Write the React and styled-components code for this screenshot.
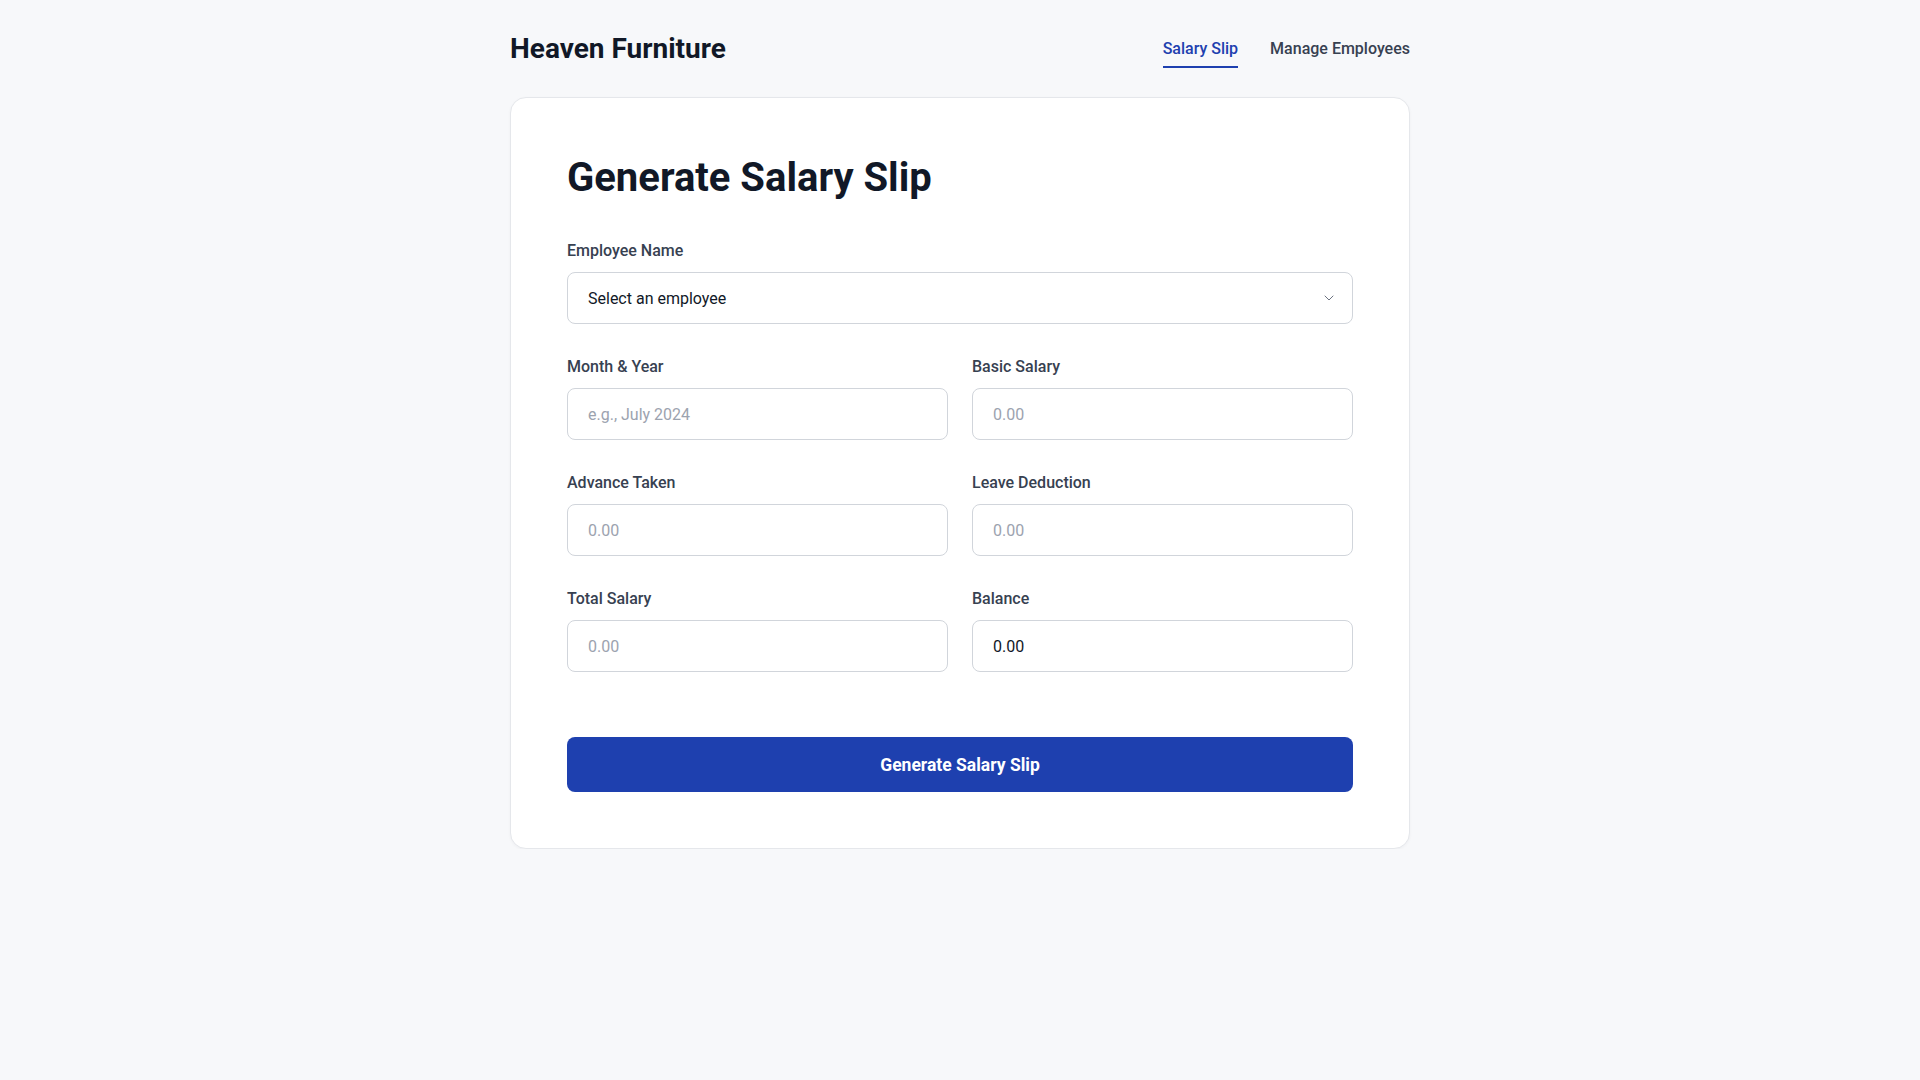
import React from "react";
import styled, { createGlobalStyle } from "styled-components";
import { ChevronDown } from "lucide-react";

const GlobalStyle = createGlobalStyle`
  * { box-sizing: border-box; }
  html, body { margin: 0; padding: 0; }
  body {
    background: #f7f8fa;
    font-family: Roboto, "Liberation Sans", Arial, sans-serif;
    color: #111827;
  }
`;

const Page = styled.div`
  width: 900px;
  margin: 0 auto;
  padding-top: 31px;
`;

const Header = styled.header`
  display: flex;
  justify-content: space-between;
  align-items: flex-start;
`;

const Brand = styled.h1`
  margin: 1px 0 0;
  font-size: 28px;
  font-weight: 700;
  color: #111827;
  line-height: normal;
`;

const Nav = styled.nav`
  display: flex;
  gap: 32px;
`;

const NavLink = styled.a`
  display: block;
  font-size: 16px;
  font-weight: 500;
  line-height: 24px;
  padding: 6px 0 5px;
  border-bottom: 2px solid ${(p) => (p.$active ? "#1e40af" : "transparent")};
  color: ${(p) => (p.$active ? "#1e40af" : "#374151")};
  text-decoration: none;
  cursor: pointer;
`;

const Card = styled.main`
  margin-top: 29px;
  background: #ffffff;
  border: 1px solid #e5e7eb;
  border-radius: 16px;
  box-shadow: 0 1px 3px rgba(15, 23, 42, 0.04);
  padding: 56px;
`;

const Title = styled.h2`
  margin: 0 0 38px;
  font-size: 40px;
  font-weight: 700;
  line-height: normal;
  color: #111827;
`;

const Form = styled.form`
  display: flex;
  flex-direction: column;
`;

const Grid = styled.div`
  display: grid;
  grid-template-columns: 1fr 1fr;
  column-gap: 24px;
  row-gap: 31px;
`;

const Field = styled.div`
  display: flex;
  flex-direction: column;
  grid-column: ${(p) => (p.$full ? "1 / -1" : "auto")};
`;

const Label = styled.label`
  font-size: 16px;
  font-weight: 500;
  line-height: 24px;
  color: #374151;
  margin-bottom: 9px;
`;

const Input = styled.input`
  height: 52px;
  width: 100%;
  padding: 0 20px;
  border: 1px solid #d1d5db;
  border-radius: 8px;
  background: #ffffff;
  font-family: inherit;
  font-size: 16px;
  color: #111827;
  outline: none;
  &::placeholder { color: #9ca3af; }
`;

const SelectWrap = styled.div`
  position: relative;
`;

const Select = styled.select`
  appearance: none;
  height: 52px;
  width: 100%;
  padding: 0 44px 0 20px;
  border: 1px solid #d1d5db;
  border-radius: 8px;
  background: #ffffff;
  font-family: inherit;
  font-size: 16px;
  color: #111827;
  outline: none;
`;

const Chevron = styled.span`
  position: absolute;
  right: 16px;
  top: 50%;
  transform: translateY(-50%);
  display: flex;
  color: #6b7280;
  pointer-events: none;
`;

const Button = styled.button`
  margin-top: 65px;
  height: 55px;
  width: 100%;
  border: none;
  border-radius: 8px;
  background: #1e40af;
  color: #ffffff;
  font-family: inherit;
  font-size: 17.5px;
  font-weight: 700;
  cursor: pointer;
`;

const fields = [
  { id: "month", label: "Month & Year", placeholder: "e.g., July 2024" },
  { id: "basic", label: "Basic Salary", placeholder: "0.00" },
  { id: "advance", label: "Advance Taken", placeholder: "0.00" },
  { id: "leave", label: "Leave Deduction", placeholder: "0.00" },
  { id: "total", label: "Total Salary", placeholder: "0.00" },
  { id: "balance", label: "Balance", value: "0.00" },
];

export default function App() {
  return (
    <>
      <GlobalStyle />
      <Page>
        <Header>
          <Brand>Heaven Furniture</Brand>
          <Nav>
            <NavLink $active>Salary Slip</NavLink>
            <NavLink>Manage Employees</NavLink>
          </Nav>
        </Header>
        <Card>
          <Title>Generate Salary Slip</Title>
          <Form onSubmit={(e) => e.preventDefault()}>
            <Grid>
              <Field $full>
                <Label htmlFor="employee">Employee Name</Label>
                <SelectWrap>
                  <Select id="employee" defaultValue="">
                    <option value="">Select an employee</option>
                  </Select>
                  <Chevron>
                    <ChevronDown size={16} strokeWidth={1.5} />
                  </Chevron>
                </SelectWrap>
              </Field>
              {fields.map((f) => (
                <Field key={f.id}>
                  <Label htmlFor={f.id}>{f.label}</Label>
                  <Input
                    id={f.id}
                    placeholder={f.placeholder}
                    defaultValue={f.value}
                  />
                </Field>
              ))}
            </Grid>
            <Button type="submit">Generate Salary Slip</Button>
          </Form>
        </Card>
      </Page>
    </>
  );
}
